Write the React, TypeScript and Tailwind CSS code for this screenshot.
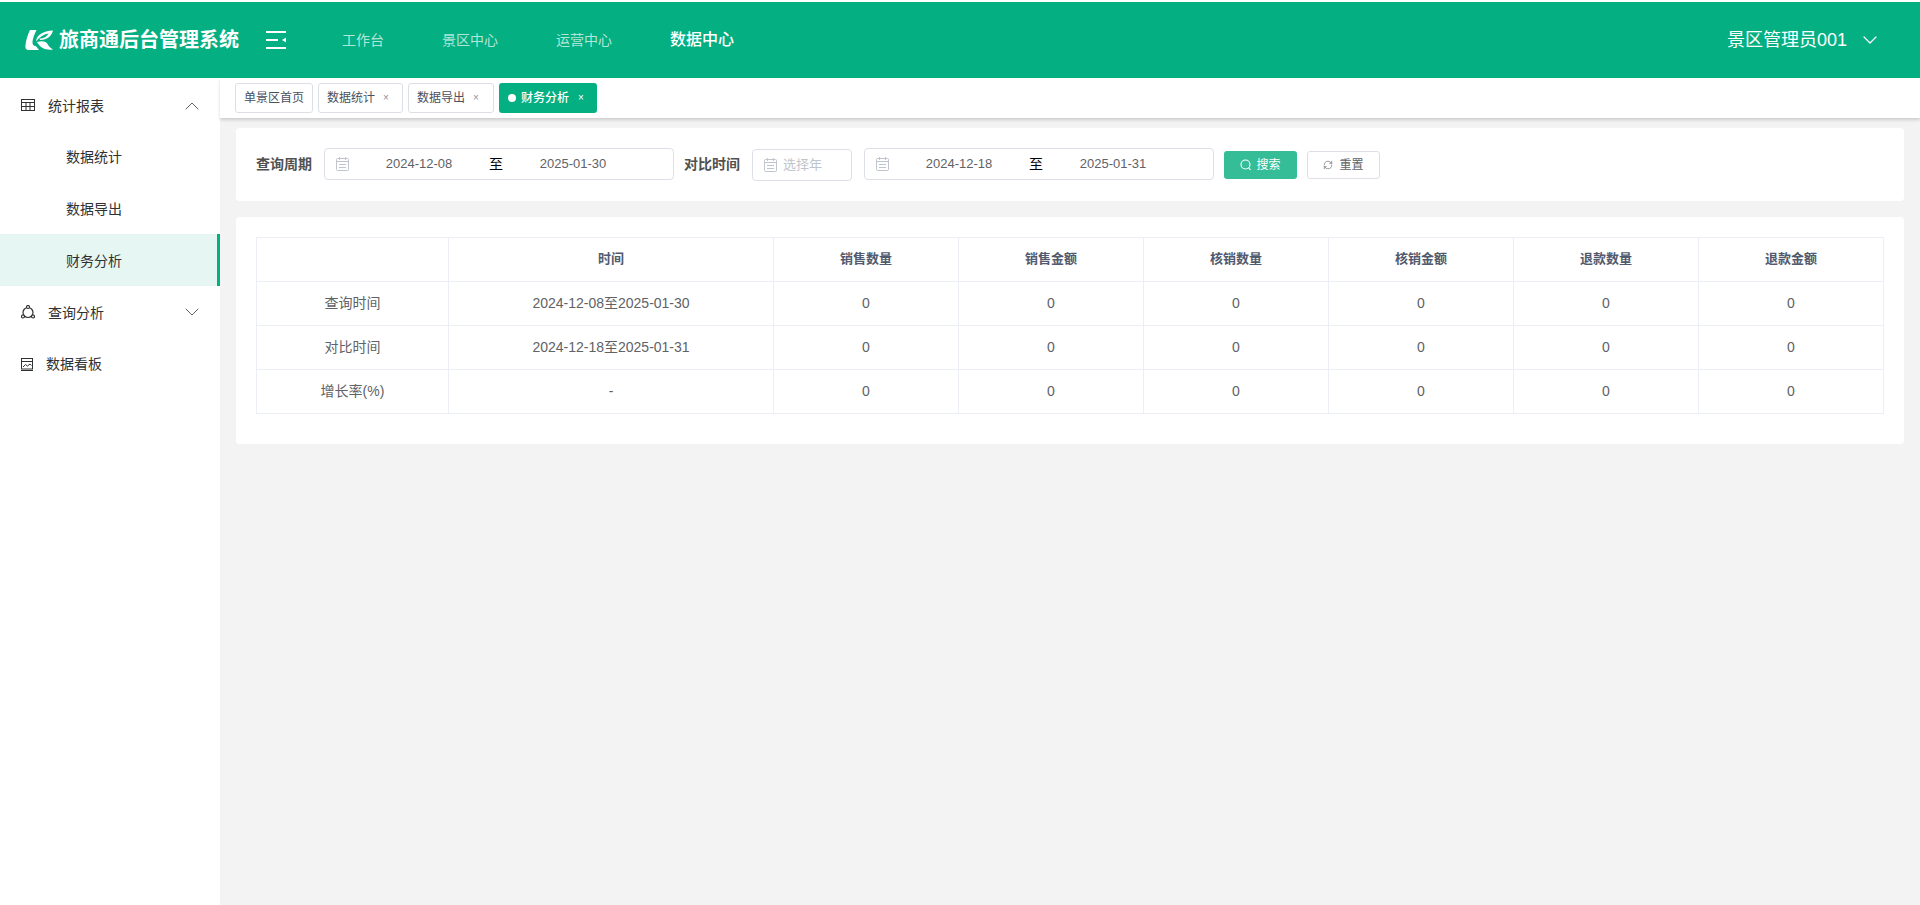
import { ChevronDown, ChevronUp, RefreshCw } from 'lucide-react'

const font = { fontFamily: '"Liberation Sans", "Noto Sans CJK SC", sans-serif' }

// Logo: leaf shaped K
function Logo() {
  return (
    <svg width="28" height="20" viewBox="0 0 28 20" fill="#fff">
      <path d="M5 0 H11.500 C9.500 4 8 8 7.500 11.500 C7.200 14.500 8.500 16 11 16.300 L14 20 H4 C1 20 0 18 .5 15 C1 10 3 4 5 0 Z" />
      <path d="M11 11.500 C11.500 5 18 1 28 .5 C27 5.500 22.500 10 15 10 L14.500 8.500 C18.500 8.500 22 6.500 23.500 3.500 C18 4.500 14 7.500 11 11.500 Z" />
      <path d="M12 12 C17 10.500 21 11 22.500 14 C23.500 16 25.500 18 28 19.500 C21 20.500 15 18 12 12 Z" />
    </svg>
  )
}

function MenuToggle() {
  return (
    <svg width="20" height="18" viewBox="0 0 20 18" fill="#fff">
      <rect width="20" height="2" />
      <rect y="8" width="12" height="2" />
      <rect y="16" width="20" height="2" />
      <path d="M20 6.500 V11.500 L16 9 Z" />
    </svg>
  )
}

function CalendarIcon() {
  return (
    <svg width="13" height="14" viewBox="0 0 13 14" fill="none" stroke="#c0c4cc" className="shrink-0">
      <rect x=".5" y="1.500" width="12" height="12" rx="1" />
      <path d="M3.500 0 V3 M9.500 0 V3 M.5 4.500 H12.500 M3 7.500 H10 M3 10.500 H10" />
    </svg>
  )
}

function DateRange({ from, to }: { from: string; to: string }) {
  return (
    <div className="flex h-8 w-[350px] items-center rounded border border-[#dcdfe6] bg-white pl-[11px] text-[13px] text-[#606266]">
      <CalendarIcon />
      <span className="ml-px w-[138px] text-center">{from}</span>
      <span className="w-4 text-center text-sm text-black">至</span>
      <span className="w-[138px] text-center">{to}</span>
    </div>
  )
}

const tabs = [
  { name: '单景区首页', w: 'w-[78px]', close: false },
  { name: '数据统计', w: 'w-[85px]', close: true },
  { name: '数据导出', w: 'w-[86px]', close: true },
]

const columns = ['时间', '销售数量', '销售金额', '核销数量', '核销金额', '退款数量', '退款金额']

const rows = [
  { label: '查询时间', time: '2024-12-08至2025-01-30' },
  { label: '对比时间', time: '2024-12-18至2025-01-31' },
  { label: '增长率(%)', time: '-' },
]

export default function App() {
  return (
    <div className="flex h-[905px] flex-col overflow-hidden bg-white pt-[2px]" style={font}>
      {/* header */}
      <header className="flex h-[76px] shrink-0 items-center bg-[#04af82] pl-[25px] text-white">
        <Logo />
        <h1 className="ml-[6px] w-[180px] text-[20px] font-bold leading-none">旅商通后台管理系统</h1>
        <div className="ml-[27px]">
          <MenuToggle />
        </div>
        <nav className="ml-[56px] flex items-center gap-[58px] text-sm text-white/70">
          <span>工作台</span>
          <span>景区中心</span>
          <span>运营中心</span>
          <span className="text-base font-medium text-white">数据中心</span>
        </nav>
        <div className="ml-auto flex items-center pr-[38px]">
          <span className="mr-px text-lg">景区管理员001</span>
          <ChevronDown size={24} strokeWidth={1.2} className="ml-[10px]" />
        </div>
      </header>

      <div className="flex min-h-0 flex-1">
        {/* sidebar */}
        <aside className="w-[220px] shrink-0 bg-white text-sm text-[#303133]">
          <div className="flex h-[52px] items-center pl-[21px] pr-[16px] pt-[3px]">
            <svg width="14" height="12" viewBox="0 0 14 12" fill="none" stroke="#303133" className="-mt-[2px]">
              <rect x=".5" y=".5" width="13" height="11" />
              <path d="M.5 3.500 H13.500 M.5 7.500 H13.500 M5 3.500 V11.500 M9 3.500 V11.500" />
            </svg>
            <span className="ml-[13px]">统计报表</span>
            <ChevronUp size={24} strokeWidth={1} className="ml-auto text-[#606266]" />
          </div>
          <div className="flex h-[52px] items-center pl-[66px] pt-[2px]">数据统计</div>
          <div className="flex h-[52px] items-center pl-[66px] pt-[2px]">数据导出</div>
          <div className="flex h-[52px] items-center border-r-[3px] border-[#04af82] bg-[#e6f7f3] pl-[66px] pt-[2px]">财务分析</div>
          <div className="flex h-[52px] items-center pl-[21px] pr-[16px]">
            <svg width="14" height="14" viewBox="0 0 14 14" fill="none" stroke="#303133" strokeWidth="1.200">
              <circle cx="7" cy="7.500" r="5" />
              <circle cx="7" cy="2" r="1.500" fill="#fff" />
              <circle cx="2" cy="11.500" r="1.500" fill="#fff" />
              <circle cx="12" cy="11.500" r="1.500" fill="#fff" />
            </svg>
            <span className="ml-[13px] mt-[2px]">查询分析</span>
            <ChevronDown size={24} strokeWidth={1} className="ml-auto text-[#606266]" />
          </div>
          <div className="flex h-[52px] items-center pl-[21px]">
            <svg width="12" height="13" viewBox="0 0 12 13" fill="none" stroke="#303133">
              <rect x=".5" y=".5" width="11" height="10.500" />
              <path d="M.5 3.500 H11.500 M2 9 L4.500 6.500 L6.500 8 L9 6 L10.500 7.500 M0 12.500 H12" />
            </svg>
            <span className="ml-[13px]">数据看板</span>
          </div>
        </aside>

        <div className="flex min-w-0 flex-1 flex-col bg-[#f3f3f3]">
          {/* tabs */}
          <div className="relative z-10 flex h-10 shrink-0 gap-[5px] bg-white pl-[15px] pt-[5px] shadow-[0_2px_3px_rgba(0,0,0,0.16)]">
            {tabs.map((t) => (
              <div
                key={t.name}
                className={`flex h-[30px] items-center rounded-[3px] border border-[#dcdfe6] pl-2 text-xs text-[#495060] ${t.w}`}
              >
                {t.name}
                {t.close && <span className="ml-[8px] text-[10px] text-[#909399]">×</span>}
              </div>
            ))}
            <div className="flex h-[30px] w-[98px] items-center rounded-[3px] bg-[#04af82] pl-[9px] text-xs font-medium text-white">
              <span className="h-2 w-2 rounded-full bg-white" />
              <span className="ml-[5px]">财务分析</span>
              <span className="ml-[9px] text-[10px]">×</span>
            </div>
          </div>

          <main className="px-4 pt-[10px]">
            {/* filters */}
            <section className="flex h-[73px] items-start rounded bg-white pl-5 pt-5 text-sm">
              <label className="w-14 font-bold leading-8 text-[#515151]">查询周期</label>
              <div className="ml-[12px]">
                <DateRange from="2024-12-08" to="2025-01-30" />
              </div>
              <label className="ml-[10px] w-14 font-bold leading-8 text-[#515151]">对比时间</label>
              <div className="ml-[12px] mt-px flex h-8 w-[100px] items-center rounded border border-[#dcdfe6] pl-[11px] text-[13px] text-[#c0c4cc]">
                <CalendarIcon />
                <span className="ml-[6px]">选择年</span>
              </div>
              <div className="ml-[12px]">
                <DateRange from="2024-12-18" to="2025-01-31" />
              </div>
              <button className="ml-[10px] mt-[3px] flex h-7 w-[73px] items-center justify-center gap-[4px] rounded-[3px] bg-[#34bd96] text-xs text-white">
                <svg width="12" height="12" viewBox="0 0 12 12" fill="none" stroke="#fff" strokeWidth="1.100">
                  <circle cx="5.500" cy="5.500" r="4.500" />
                  <path d="M8.800 8.800 L10.500 11" />
                </svg>
                搜索
              </button>
              <button className="ml-[10px] mt-[3px] flex h-7 w-[73px] items-center justify-center gap-[6px] rounded-[3px] border border-[#dcdfe6] text-xs text-[#606266]">
                <RefreshCw size={10} strokeWidth={1.5} />
                重置
              </button>
            </section>

            {/* comparison table */}
            <section className="mt-4 h-[227px] rounded bg-white px-5 pt-5">
              <table className="w-full table-fixed border-collapse text-center text-sm text-[#606266]">
                <colgroup>
                  <col className="w-[192px]" />
                  <col className="w-[325px]" />
                </colgroup>
                <thead>
                  <tr className="h-11">
                    <th className="border border-[#ebeef5]" />
                    {columns.map((c) => (
                      <th key={c} className="border border-[#ebeef5] text-[13px] font-bold text-[#515a6e]">
                        {c}
                      </th>
                    ))}
                  </tr>
                </thead>
                <tbody>
                  {rows.map((r) => (
                    <tr key={r.label} className="h-11">
                      <td className="border border-[#ebeef5] pb-[2px]">{r.label}</td>
                      <td className="border border-[#ebeef5] pb-[2px]">{r.time}</td>
                      {columns.slice(1).map((c) => (
                        <td key={c} className="border border-[#ebeef5] pb-[2px]">0</td>
                      ))}
                    </tr>
                  ))}
                </tbody>
              </table>
            </section>
          </main>
        </div>
      </div>
    </div>
  )
}
